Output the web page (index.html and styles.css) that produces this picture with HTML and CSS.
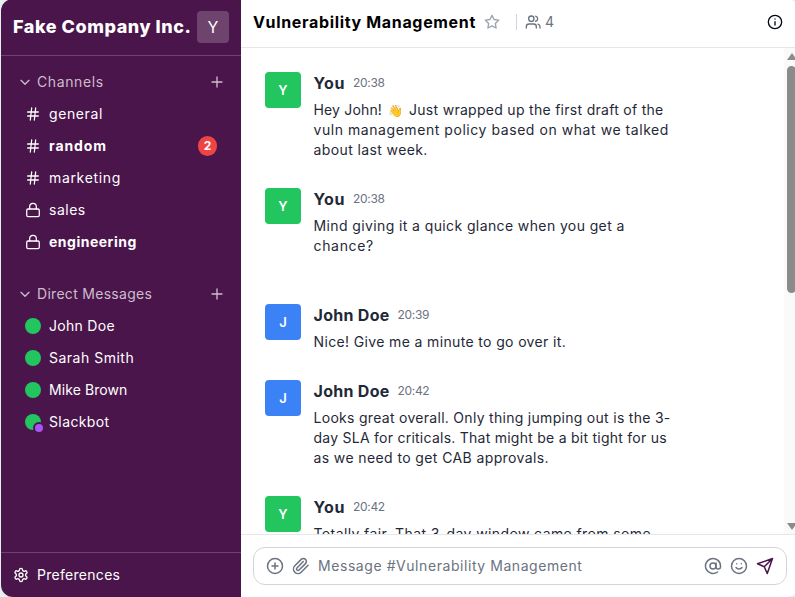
FILE: index.html
```html
<!DOCTYPE html>
<html lang="en">
<head>
<meta charset="utf-8">
<title>Vulnerability Management</title>
<link rel="stylesheet" href="styles.css">
</head>
<body>
<svg class="defs" aria-hidden="true">
  <symbol id="hash" viewBox="0 0 24 24"><path d="M4 9h16M4 15h16M10 3 8 21M16 3l-2 18"/></symbol>
  <symbol id="lock" viewBox="0 0 24 24"><rect x="2.6" y="10.5" width="18.8" height="11.5" rx="2"/><path d="M7 10.500V7a5 5 0 0 1 10 0v3.500"/></symbol>
  <symbol id="plus" viewBox="0 0 24 24"><path d="M4.500 12h15M12 4.500v15"/></symbol>
  <symbol id="chevron" viewBox="0 0 24 24"><path d="m6 9.500 6 6 6-6"/></symbol>
</svg>
<div class="app">
  <aside class="sidebar">
    <header class="workspace">
      <h1 class="workspace-name">Fake Company Inc.</h1>
      <div class="profile">Y</div>
    </header>
    <nav class="nav">
      <section class="group">
        <div class="group-head"><svg class="icon chev"><use href="#chevron"/></svg><span class="ls-6">Channels</span><svg class="icon add"><use href="#plus"/></svg></div>
        <a class="item"><svg class="icon"><use href="#hash"/></svg><span class="ls-6">general</span></a>
        <a class="item unread"><svg class="icon"><use href="#hash"/></svg><span class="ls-9">random</span><span class="badge">2</span></a>
        <a class="item"><svg class="icon"><use href="#hash"/></svg><span class="ls-7">marketing</span></a>
        <a class="item"><svg class="icon"><use href="#lock"/></svg><span class="ls-5">sales</span></a>
        <a class="item unread"><svg class="icon"><use href="#lock"/></svg><span class="ls-5">engineering</span></a>
      </section>
      <section class="group">
        <div class="group-head"><svg class="icon chev"><use href="#chevron"/></svg><span class="ls-3">Direct Messages</span><svg class="icon add"><use href="#plus"/></svg></div>
        <a class="item"><i class="presence"></i><span class="ls-3">John Doe</span></a>
        <a class="item"><i class="presence"></i><span class="ls-5">Sarah Smith</span></a>
        <a class="item"><i class="presence"></i><span class="ls-1">Mike Brown</span></a>
        <a class="item"><i class="presence bot"></i><span class="ls-4">Slackbot</span></a>
      </section>
    </nav>
    <footer class="prefs">
      <svg class="icon" viewBox="0 0 24 24"><path d="M12.220 2h-.44a2 2 0 0 0-2 2v.18a2 2 0 0 1-1 1.730l-.43.25a2 2 0 0 1-2 0l-.15-.08a2 2 0 0 0-2.730.73l-.22.38a2 2 0 0 0 .73 2.730l.15.1a2 2 0 0 1 1 1.720v.51a2 2 0 0 1-1 1.740l-.15.09a2 2 0 0 0-.73 2.730l.22.38a2 2 0 0 0 2.730.73l.15-.08a2 2 0 0 1 2 0l.43.25a2 2 0 0 1 1 1.730V20a2 2 0 0 0 2 2h.44a2 2 0 0 0 2-2v-.18a2 2 0 0 1 1-1.730l.43-.25a2 2 0 0 1 2 0l.15.08a2 2 0 0 0 2.730-.73l.22-.39a2 2 0 0 0-.73-2.730l-.15-.08a2 2 0 0 1-1-1.740v-.5a2 2 0 0 1 1-1.740l.15-.09a2 2 0 0 0 .73-2.730l-.22-.38a2 2 0 0 0-2.730-.73l-.15.08a2 2 0 0 1-2 0l-.43-.25a2 2 0 0 1-1-1.730V4a2 2 0 0 0-2-2z"/><circle cx="12" cy="12" r="3"/></svg>
      <span class="ls-3">Preferences</span>
    </footer>
  </aside>
  <main class="main">
    <header class="topbar">
      <h2 class="title">Vulnerability Management</h2>
      <svg class="icon star" viewBox="0 0 24 24"><path d="m12 2 3.090 6.260L22 9.270l-5 4.870 1.180 6.880L12 17.770l-6.180 3.250L7 14.140 2 9.270l6.910-1.010z"/></svg>
      <div class="members">
        <svg class="icon" viewBox="0 0 24 24"><path d="M17 21v-2a4 4 0 0 0-4-4H6a4 4 0 0 0-4 4v2M22.500 21v-2a4 4 0 0 0-3-3.870M16 3.130a4 4 0 0 1 0 7.750"/><circle cx="9.500" cy="7" r="4"/></svg>
        <span>4</span>
      </div>
      <svg class="icon info" viewBox="0 0 24 24"><circle cx="12" cy="12" r="10"/><path d="M12 16.500v-5M12 7.500h.01"/></svg>
    </header>
    <div class="stage">
      <div class="messages">
        <article class="msg">
          <div class="avatar you">Y</div>
          <div class="body">
            <div class="meta"><b class="ls-6">You</b><time>20:38</time></div>
            <p><span class="line"><span class="ls-2">Hey John!</span><span class="wave">👋</span><span class="ls-3">Just wrapped up the first draft of the</span></span>
            <span class="line ls-55">vuln management policy based on what we talked</span>
            <span class="line ls-4">about last week.</span></p>
          </div>
        </article>
        <article class="msg last">
          <div class="avatar you">Y</div>
          <div class="body">
            <div class="meta"><b class="ls-6">You</b><time>20:38</time></div>
            <p><span class="line ls-4">Mind giving it a quick glance when you get a</span>
            <span class="line ls-7">chance?</span></p>
          </div>
        </article>
        <article class="msg">
          <div class="avatar john">J</div>
          <div class="body">
            <div class="meta"><b class="ls-3">John Doe</b><time>20:39</time></div>
            <p><span class="line ls-35">Nice! Give me a minute to go over it.</span></p>
          </div>
        </article>
        <article class="msg">
          <div class="avatar john">J</div>
          <div class="body">
            <div class="meta"><b class="ls-3">John Doe</b><time>20:42</time></div>
            <p><span class="line ls-3">Looks great overall. Only thing jumping out is the 3-</span>
            <span class="line ls-25">day SLA for criticals. That might be a bit tight for us</span>
            <span class="line ls-4">as we need to get CAB approvals.</span></p>
          </div>
        </article>
        <article class="msg">
          <div class="avatar you">Y</div>
          <div class="body">
            <div class="meta"><b class="ls-6">You</b><time>20:42</time></div>
            <p><span class="line ls-4">Totally fair. That 3-day window came from some</span></p>
          </div>
        </article>
      </div>
      <div class="scrollbar"><i class="up"></i><i class="thumb"></i><i class="down"></i></div>
    </div>
    <footer class="composer">
      <div class="field">
        <svg class="icon" viewBox="0 0 24 24"><circle cx="12" cy="12" r="10"/><path d="M8 12h8M12 8v8"/></svg>
        <svg class="icon" viewBox="0 0 24 24"><path d="m21.440 11.050-9.190 9.190a6 6 0 0 1-8.490-8.490l8.570-8.570A4 4 0 1 1 18 8.840l-8.590 8.570a2 2 0 0 1-2.830-2.830l8.490-8.480"/></svg>
        <span class="placeholder">Message #Vulnerability Management</span>
        <svg class="icon" viewBox="0 0 24 24"><circle cx="12" cy="12" r="4"/><path d="M16 8v5a3 3 0 0 0 6 0v-1a10 10 0 1 0-4 8"/></svg>
        <svg class="icon" viewBox="0 0 24 24"><circle cx="12" cy="12" r="10"/><path d="M8 14s1.500 2 4 2 4-2 4-2M9 9h.01M15 9h.01"/></svg>
        <svg class="icon send" viewBox="0 0 24 24"><path d="M22 2 11 13M22 2l-7 20-4-9-9-4z"/></svg>
      </div>
    </footer>
  </main>
</div>
</body>
</html>
```
FILE: styles.css
```css
*, *::after { box-sizing: border-box; }
html, body { height: 100%; }
body {
  margin: 0;
  overflow: hidden;
  background: #e6f0f2;
  font: 14px/20px Inter, "Liberation Sans", sans-serif;
}
h1, h2, p { margin: 0; }
.defs { display: none; }
.icon {
  width: 16px;
  height: 16px;
  flex: none;
  fill: none;
  stroke: currentColor;
  stroke-width: 2;
  stroke-linecap: round;
  stroke-linejoin: round;
}
.app {
  display: flex;
  width: 798px;
  height: 598px;
  margin: -1px 0 0 1px;
  border-radius: 12px;
  overflow: hidden;
  background: #fff;
}

/* letter spacing steps */
.ls-1 { letter-spacing: .09px; }
.ls-2 { letter-spacing: .16px; }
.ls-25 { letter-spacing: .25px; }
.ls-3 { letter-spacing: .29px; }
.ls-35 { letter-spacing: .36px; }
.ls-4 { letter-spacing: .39px; }
.ls-5 { letter-spacing: .5px; }
.ls-55 { letter-spacing: .555px; }
.ls-6 { letter-spacing: .6px; }
.ls-7 { letter-spacing: .67px; }
.ls-9 { letter-spacing: .9px; }

/* sidebar */
.sidebar {
  display: flex;
  flex-direction: column;
  flex: 0 0 240px;
  background: #4a154b;
  color: #fff;
}
.workspace {
  display: flex;
  align-items: center;
  justify-content: space-between;
  height: 57px;
  padding: 0 12px;
  border-bottom: 1px solid #6e446f;
}
.workspace-name {
  font-size: 18px;
  line-height: 28px;
  font-weight: 800;
  letter-spacing: .54px;
  white-space: nowrap;
}
.profile {
  width: 32px;
  height: 32px;
  border-radius: 4px;
  background: #6e446f;
  font-size: 16px;
  line-height: 32px;
  text-align: center;
}
.nav { flex: 1; padding: 10px 8px 0; }
.group { margin-bottom: 20px; }
.group-head, .item {
  display: flex;
  align-items: center;
  height: 32px;
}
.group-head { padding: 0 8px; color: #cdbccd; gap: 4px; }
.add { margin-left: auto; }
.item { padding: 0 16px; gap: 8px; }
.item .icon { stroke-width: 1.9; }
.unread { font-weight: 700; }
.badge {
  width: 19px;
  height: 20px;
  margin-left: auto;
  border-radius: 10px;
  background: #ef4444;
  font-size: 12px;
  text-align: center;
}
.presence {
  position: relative;
  width: 16px;
  height: 16px;
  border-radius: 50%;
  background: #22c55e;
}
.bot::after {
  content: "";
  position: absolute;
  right: -4px;
  bottom: -4px;
  width: 12px;
  height: 12px;
  border: 2px solid #4a154b;
  border-radius: 50%;
  background: #a855f7;
}
.prefs {
  display: flex;
  align-items: center;
  gap: 8px;
  height: 45px;
  padding: 0 12px;
  border-top: 1px solid #6e446f;
}

/* main column */
.main { display: flex; flex: 1; flex-direction: column; min-width: 0; }
.topbar {
  display: flex;
  align-items: center;
  height: 49px;
  padding: 0 16px 2px 12px;
  border-bottom: 1px solid #e5e7eb;
}
.title {
  width: 223px;
  font-size: 16px;
  line-height: 24px;
  font-weight: 700;
  letter-spacing: .66px;
  white-space: nowrap;
}
.star { margin-left: 8px; color: #9ca3af; }
.members {
  display: flex;
  align-items: center;
  height: 16px;
  margin-left: 16px;
  padding-left: 8px;
  gap: 4px;
  border-left: 1px solid #d1d5db;
  color: #6b7280;
}
.info { margin-left: auto; color: #030712; }
.stage { display: flex; flex: 1; min-height: 0; overflow: hidden; }
.messages { flex: 1; padding: 24px; }
.msg { display: flex; gap: 12.5px; margin-bottom: 28px; }
.last { margin-bottom: 48px; }
.avatar {
  flex: none;
  width: 36px;
  height: 36px;
  border-radius: 4px;
  color: #fff;
  font-size: 13px;
  font-weight: 600;
  line-height: 36px;
  text-align: center;
}
.you { background: #22c55e; }
.john { background: #3b82f6; }
.meta { display: flex; align-items: center; gap: 8px; height: 22px; margin-bottom: 6px; color: #1f2937; }
.meta b { font-size: 16px; }
.meta time { color: #6b7280; font-size: 12px; letter-spacing: -.33px; }
.body p { color: #1f2937; }
.line { display: block; height: 20px; white-space: nowrap; }
.wave { display: inline-block; width: 14px; margin: 0 7px 0 6px; font-size: 12px; }
.scrollbar {
  display: flex;
  flex-direction: column;
  align-items: center;
  width: 15px;
  padding: 5px 0 4px;
  background: #fafafa;
}
.up, .down { border: 5px solid transparent; }
.up { border-top: 0; border-bottom: 7px solid #8b8b8b; }
.down { margin-top: auto; border-bottom: 0; border-top: 7px solid #8b8b8b; }
.thumb { width: 9px; height: 227px; margin-top: 6px; border-radius: 5px; background: #8b8b8b; }

/* composer */
.composer { height: 63px; padding: 12px; border-top: 1px solid #e5e7eb; }
.field {
  display: flex;
  align-items: center;
  height: 38px;
  padding: 0 12px;
  gap: 8px;
  border: 1px solid #d1d5db;
  border-radius: 12px;
  color: #6b7280;
}
.field .icon { width: 18px; height: 18px; }
.placeholder { flex: 1; letter-spacing: .562px; white-space: nowrap; }
.field .send { color: #4a154b; }
```
